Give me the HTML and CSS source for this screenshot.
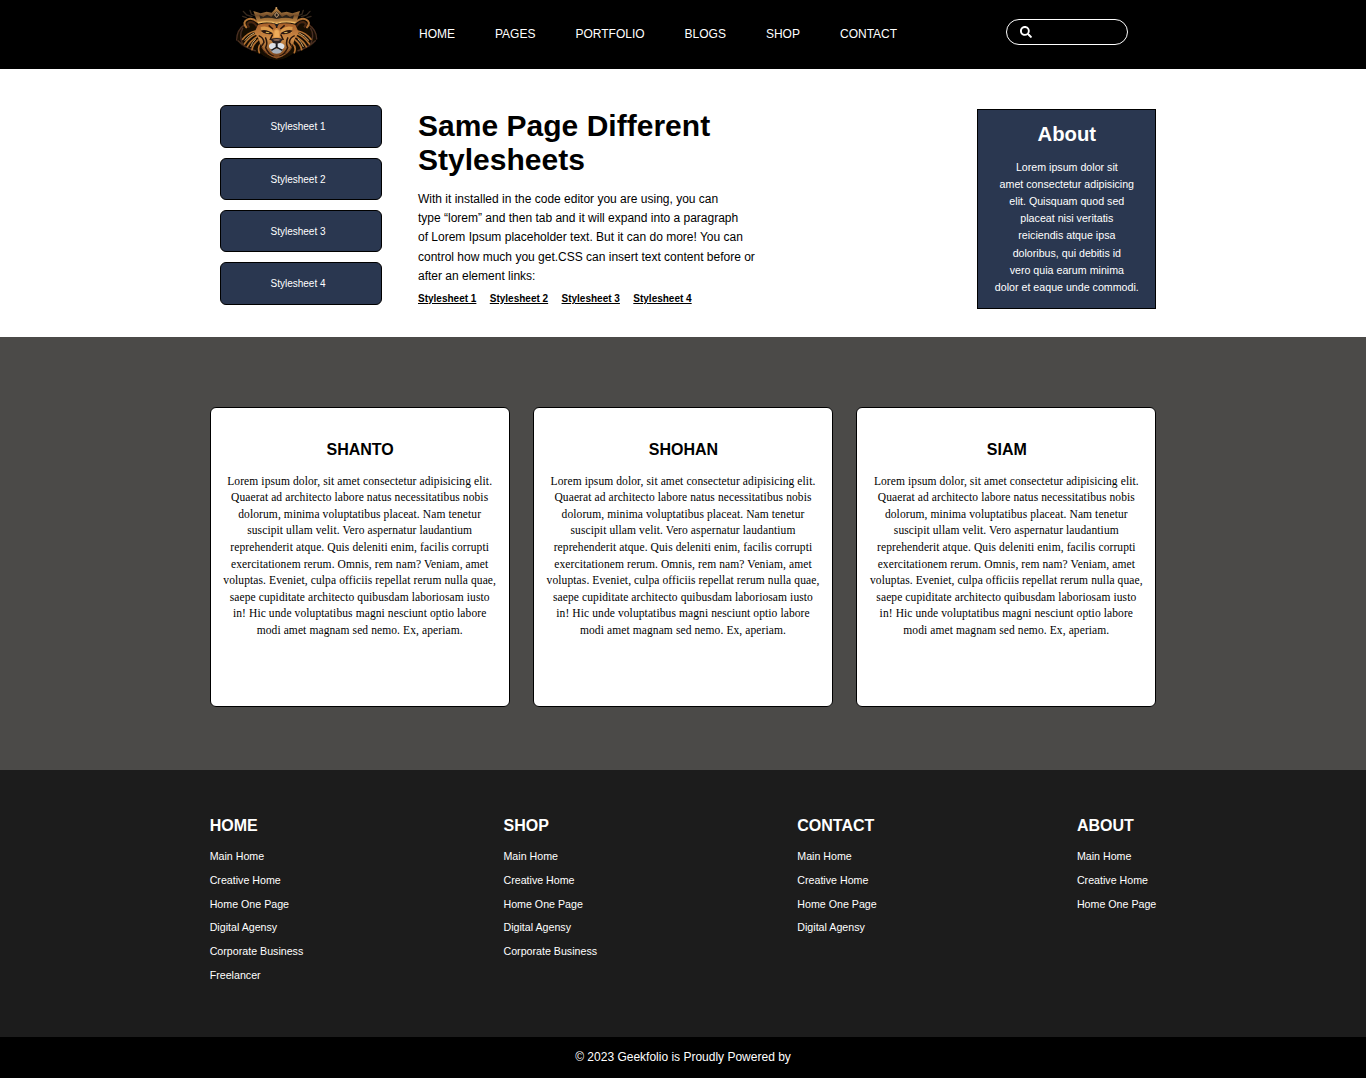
FILE: index.html
```html
<!DOCTYPE html>
<html lang="en">
<head>
<meta charset="utf-8">
<title>Geekfolio</title>
<link rel="stylesheet" href="styles.css">
</head>
<body>
<header class="header">
  <div class="container header-row">
    <svg class="logo" viewBox="0 0 300 207" aria-label="Crowned lion">
      <defs>
        <linearGradient id="gold" x1="0" y1="0" x2="0" y2="1"><stop offset="0" stop-color="#c48c48"/><stop offset=".5" stop-color="#76502a"/><stop offset="1" stop-color="#d99c50"/></linearGradient>
        <linearGradient id="fur" x1="0" y1="0" x2="0" y2="1"><stop offset="0" stop-color="#a8602a"/><stop offset=".45" stop-color="#cf8d48"/><stop offset="1" stop-color="#6a3a18"/></linearGradient>
        <filter id="soft"><feGaussianBlur stdDeviation="1.6"/></filter>
      </defs>
      <g filter="url(#soft)">
        <path d="M54 70Q28 98 36 122Q44 140 62 145Q85 158 103 161Q125 178 152 180Q179 178 201 161Q220 157 243 145Q264 136 270 119Q275 95 250 70L225 55H80Z" fill="#150c06"/>
        <g fill="none" stroke-linecap="round">
          <path d="M56 74Q32 90 32 120M50 85Q38 105 50 133M36 122Q55 142 88 152M248 74Q272 90 272 117M254 85Q266 105 254 133M268 122Q248 142 216 152" stroke="#4a2f20" stroke-width="4"/>
          <path d="M88 93Q65 98 50 118M90 102Q70 110 55 132M92 111Q73 123 64 140M96 120Q81 132 78 149M104 132Q94 141 100 158M216 93Q240 98 255 118M214 102Q235 110 250 132M212 111Q232 123 241 140M208 120Q224 132 227 149M200 132Q212 141 205 158" stroke="#b57330" stroke-width="5"/>
          <path d="M84 99Q68 106 57 121M88 118Q78 127 74 140M220 99Q236 106 248 121M217 118Q227 127 232 140" stroke="#f7cb84" stroke-width="2.500"/>
          <path d="M61 82Q48 66 65 58Q78 52 95 66M243 82Q256 66 239 58Q226 52 209 66" stroke="#b37435" stroke-width="6"/>
          <path d="M68 80Q60 69 72 66Q84 66 91 77M236 80Q244 69 232 66Q220 66 213 77" stroke="#4a2811" stroke-width="6"/>
          <path d="M52 34L62 45L78 50M72 31L76 43L88 47M50 49L61 53M252 34L242 45L226 50M232 31L228 43L216 47M255 49L243 53" stroke="#382a1e" stroke-width="4"/>
        </g>
        <path d="M96 74Q124 67 152 72Q180 67 208 74L219 98Q205 114 202 131L190 156L168 170L152 176L136 170L114 156L102 131Q99 113 85 98Z" fill="url(#fur)"/>
        <path d="M104 81Q122 76 137 87L143 98L126 95L107 100ZM200 81Q182 76 167 87L161 98L178 95L197 100Z" fill="#dc9b4c"/>
        <path d="M104 92Q121 86 142 101Q125 105 111 98ZM200 92Q183 86 162 101Q179 105 193 98Z" fill="#2a1710"/>
        <path d="M120 95L131 97L127 100L119 98ZM184 95L173 97L177 100L185 98Z" fill="#d9b458"/>
        <path d="M143 92L135 118L152 124L169 118L161 92L152 83Z" fill="#d98f45"/>
        <path d="M146 92Q152 88 158 92L160 112H144Z" fill="#efac5a"/>
        <path d="M133 117Q152 111 171 117L162 130L152 134L142 130Z" fill="#2b2122"/>
        <path d="M140 119Q152 115 164 119L158 122H146Z" fill="#94705e"/>
        <path d="M151 132Q136 124 129 135Q127 147 140 149L152 142L165 149Q177 146 175 135Q165 124 153 132Z" fill="#dce1e8"/>
        <path d="M133 150Q152 141 171 150L163 159Q152 164 141 159Z" fill="#a9b1bb"/>
        <path d="M151 131V142L136 151M153 131V142L169 151" fill="none" stroke="#19191d" stroke-width="4"/>
        <g fill="none" stroke="#2a1407" stroke-width="4.500">
          <path d="M98 107Q112 112 114 127L108 137M206 107Q192 112 190 127L196 137M118 112Q126 128 119 143Q127 162 144 169M186 112Q178 128 185 143Q177 162 160 169"/>
          <path d="M104 134Q109 157 133 166M200 134Q195 157 171 166M140 103L132 120M164 103L172 120M152 66V84M128 76L141 87M176 76L163 87"/>
        </g>
        <path d="M108 142Q123 168 151 173Q181 168 197 142" fill="none" stroke="#935a28" stroke-width="3"/>
        <path d="M82 33L104 40L122 35L137 38L151 23L166 38L182 35L199 40L222 33L210 70Q185 61 152 69Q119 61 95 70Z" fill="url(#gold)"/>
        <path d="M100 46L112 50L123 44L136 50L152 34L168 50L181 44L192 50L204 46L201 56Q177 50 152 57Q127 50 103 56Z" fill="#2c2119"/>
        <path d="M95 61Q125 53 152 61Q179 53 209 61" fill="none" stroke="#a97637" stroke-width="3"/>
        <path d="M96 69Q125 62 152 70Q179 62 208 69" fill="none" stroke="#f0bb65" stroke-width="4"/>
        <path d="M152 35L160 45L152 54L144 45Z" fill="#b6946a"/>
        <path d="M152 40L156 45L152 50L148 45Z" fill="#211c1b"/>
        <path d="M143 69L152 74L161 69L152 82Z" fill="#171d25"/>
        <circle cx="151" cy="24" r="3" fill="#d1a269"/>
      </g>
    </svg>
    <nav class="nav"><a>HOME</a><a>PAGES</a><a>PORTFOLIO</a><a>BLOGS</a><a>SHOP</a><a>CONTACT</a></nav>
    <div class="search">
      <svg viewBox="0 0 512 512"><path fill="#fff" d="M505 442.700 405.300 343c-4.500-4.500-10.600-7-17-7H372c27.600-35.300 44-79.700 44-128C416 93.100 322.900 0 208 0S0 93.100 0 208s93.100 208 208 208c48.300 0 92.700-16.400 128-44v16.300c0 6.400 2.500 12.500 7 17l99.700 99.700c9.400 9.400 24.600 9.400 33.900 0l28.300-28.300c9.400-9.400 9.400-24.600.1-34zM208 336a128 128 0 1 1 0-256 128 128 0 0 1 0 256z"/></svg>
    </div>
  </div>
</header>

<section class="hero">
  <div class="container hero-row">
    <div class="buttons"><a>Stylesheet 1</a><a>Stylesheet 2</a><a>Stylesheet 3</a><a>Stylesheet 4</a></div>
    <div class="intro">
      <h1>Same Page Different<br>Stylesheets</h1>
      <p>With it installed in the code editor you are using, you can<br>type “lorem” and then tab and it will expand into a paragraph<br>of Lorem Ipsum placeholder text. But it can do more! You can<br>control how much you get.CSS can insert text content before or<br>after an element links:</p>
      <div class="links"><a>Stylesheet 1</a><a>Stylesheet 2</a><a>Stylesheet 3</a><a>Stylesheet 4</a></div>
    </div>
    <aside class="about">
      <h2>About</h2>
      <p>Lorem ipsum dolor sit<br>amet consectetur adipisicing<br>elit. Quisquam quod sed<br>placeat nisi veritatis<br>reiciendis atque ipsa<br>doloribus, qui debitis id<br>vero quia earum minima<br>dolor et eaque unde commodi.</p>
    </aside>
  </div>
</section>

<section class="team">
  <div class="container cards">
    <article class="card"><h3>SHANTO</h3><p>Lorem ipsum dolor, sit amet consectetur adipisicing elit.<br>Quaerat ad architecto labore natus necessitatibus nobis<br>dolorum, minima voluptatibus placeat. Nam tenetur<br>suscipit ullam velit. Vero aspernatur laudantium<br>reprehenderit atque. Quis deleniti enim, facilis corrupti<br>exercitationem rerum. Omnis, rem nam? Veniam, amet<br>voluptas. Eveniet, culpa officiis repellat rerum nulla quae,<br>saepe cupiditate architecto quibusdam laboriosam iusto<br>in! Hic unde voluptatibus magni nesciunt optio labore<br>modi amet magnam sed nemo. Ex, aperiam.</p></article>
    <article class="card"><h3>SHOHAN</h3><p>Lorem ipsum dolor, sit amet consectetur adipisicing elit.<br>Quaerat ad architecto labore natus necessitatibus nobis<br>dolorum, minima voluptatibus placeat. Nam tenetur<br>suscipit ullam velit. Vero aspernatur laudantium<br>reprehenderit atque. Quis deleniti enim, facilis corrupti<br>exercitationem rerum. Omnis, rem nam? Veniam, amet<br>voluptas. Eveniet, culpa officiis repellat rerum nulla quae,<br>saepe cupiditate architecto quibusdam laboriosam iusto<br>in! Hic unde voluptatibus magni nesciunt optio labore<br>modi amet magnam sed nemo. Ex, aperiam.</p></article>
    <article class="card"><h3>SIAM</h3><p>Lorem ipsum dolor, sit amet consectetur adipisicing elit.<br>Quaerat ad architecto labore natus necessitatibus nobis<br>dolorum, minima voluptatibus placeat. Nam tenetur<br>suscipit ullam velit. Vero aspernatur laudantium<br>reprehenderit atque. Quis deleniti enim, facilis corrupti<br>exercitationem rerum. Omnis, rem nam? Veniam, amet<br>voluptas. Eveniet, culpa officiis repellat rerum nulla quae,<br>saepe cupiditate architecto quibusdam laboriosam iusto<br>in! Hic unde voluptatibus magni nesciunt optio labore<br>modi amet magnam sed nemo. Ex, aperiam.</p></article>
  </div>
</section>

<footer>
  <div class="footer">
    <div class="container footer-row">
      <div class="col"><h4>HOME</h4><a>Main Home</a><a>Creative Home</a><a>Home One Page</a><a>Digital Agensy</a><a>Corporate Business</a><a>Freelancer</a></div>
      <div class="col"><h4>SHOP</h4><a>Main Home</a><a>Creative Home</a><a>Home One Page</a><a>Digital Agensy</a><a>Corporate Business</a></div>
      <div class="col"><h4>CONTACT</h4><a>Main Home</a><a>Creative Home</a><a>Home One Page</a><a>Digital Agensy</a></div>
      <div class="col"><h4>ABOUT</h4><a>Main Home</a><a>Creative Home</a><a>Home One Page</a></div>
    </div>
  </div>
  <div class="copyright">© 2023 Geekfolio is Proudly Powered by</div>
</footer>
</body>
</html>
```
FILE: styles.css
```css
* { box-sizing: border-box; margin: 0; padding: 0; }
body { font-family: "Liberation Sans", Arial, sans-serif; background: #fff; color: #000; }
.container { width: 946.67px; margin: 0 auto; }

.header { height: 69px; background: #000; }
.header-row { display: flex; }
.logo { width: 100px; height: 69px; margin-left: 16.33px; flex: none; }
.nav { display: flex; gap: 40px; margin-left: 93px; color: #fff; font-size: 12px; line-height: 14px; padding-top: 27px; }
.search { width: 122px; height: 26px; margin: 19px 28.33px 0 auto; border: 1px solid #fff; border-radius: 13px; padding: 6px 13px; }
.search svg { display: block; width: 12px; height: 12px; }

.hero { height: 268px; }
.hero-row { display: flex; }
.buttons { display: flex; flex-direction: column; gap: 9.9px; width: 162px; margin: 36.4px 0 0 10.33px; }
.buttons a { height: 42.36px; border: 1px solid #000; border-radius: 6px; background: #2a3750; color: #fff; font-size: 10px; line-height: 41px; text-align: center; padding-right: 6px; }
.intro { margin-left: 36px; padding-top: 40px; }
.intro h1 { font-size: 30px; line-height: 34px; letter-spacing: .02px; }
.intro p { font-size: 12px; line-height: 19.3px; margin-top: 12.8px; white-space: nowrap; }
.links { display: flex; gap: 13.4px; margin-top: 6.7px; font-size: 10px; line-height: 11px; font-weight: bold; }
.links a { text-decoration: underline; }
.about { width: 179px; height: 200px; margin: 40px 0 0 auto; border: 1px solid #000; background: #2a3750; color: #fff; text-align: center; padding-top: 12px; }
.about h2 { font-size: 20.3px; line-height: 24px; }
.about p { font-size: 10.67px; line-height: 17.14px; margin-top: 12.8px; white-space: nowrap; }

.team { height: 433px; background: #4b4a48; padding-top: 70px; }
.cards { display: flex; justify-content: space-between; }
.card { width: 300px; height: 300px; border: 1px solid #000; border-radius: 6px; background: #fff; text-align: center; padding-top: 32px; }
.card h3 { font-size: 16px; line-height: 19px; padding-left: 1px; }
.card p { font-family: "Liberation Serif", Georgia, serif; font-size: 11.5px; line-height: 16.6px; letter-spacing: .1px; margin-top: 13.7px; white-space: nowrap; }

.footer { height: 267px; background: #1c1c1c; color: #fff; padding-top: 46px; }
.footer-row { display: flex; justify-content: space-between; }
.col { display: flex; flex-direction: column; }
.col h4 { font-size: 16px; line-height: 19px; margin-bottom: 10.1px; }
.col a { font-size: 10.67px; line-height: 23.75px; }
.copyright { height: 41px; background: #000; color: #fff; text-align: center; font-size: 12px; line-height: 40px; }
```
